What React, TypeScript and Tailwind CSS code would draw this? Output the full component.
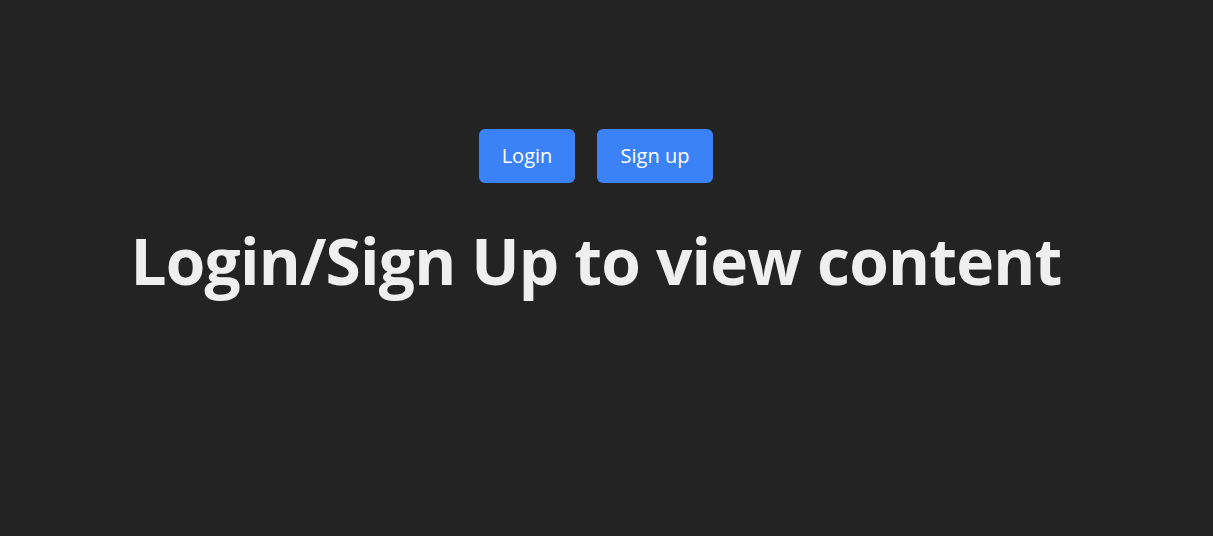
export default function App() {
  return (
    <div
      className="min-h-screen w-full bg-[#232323] text-[#efefef] flex flex-col items-center pt-[129px] pr-[21px]"
      style={{ fontFamily: '"Open Sans", "Noto Sans", sans-serif' }}
    >
      <div className="flex gap-[22px]">
        <button className="h-[54px] w-[96px] rounded-md bg-[#3b82f6] text-white text-[20px]">Login</button>
        <button className="h-[54px] w-[116px] rounded-md bg-[#3b82f6] text-white text-[20px]">Sign up</button>
      </div>
      <h1 className="mt-[40px] text-[64px] font-bold leading-[1.2] tracking-[-0.8px]">Login/Sign Up to view content</h1>
    </div>
  );
}
